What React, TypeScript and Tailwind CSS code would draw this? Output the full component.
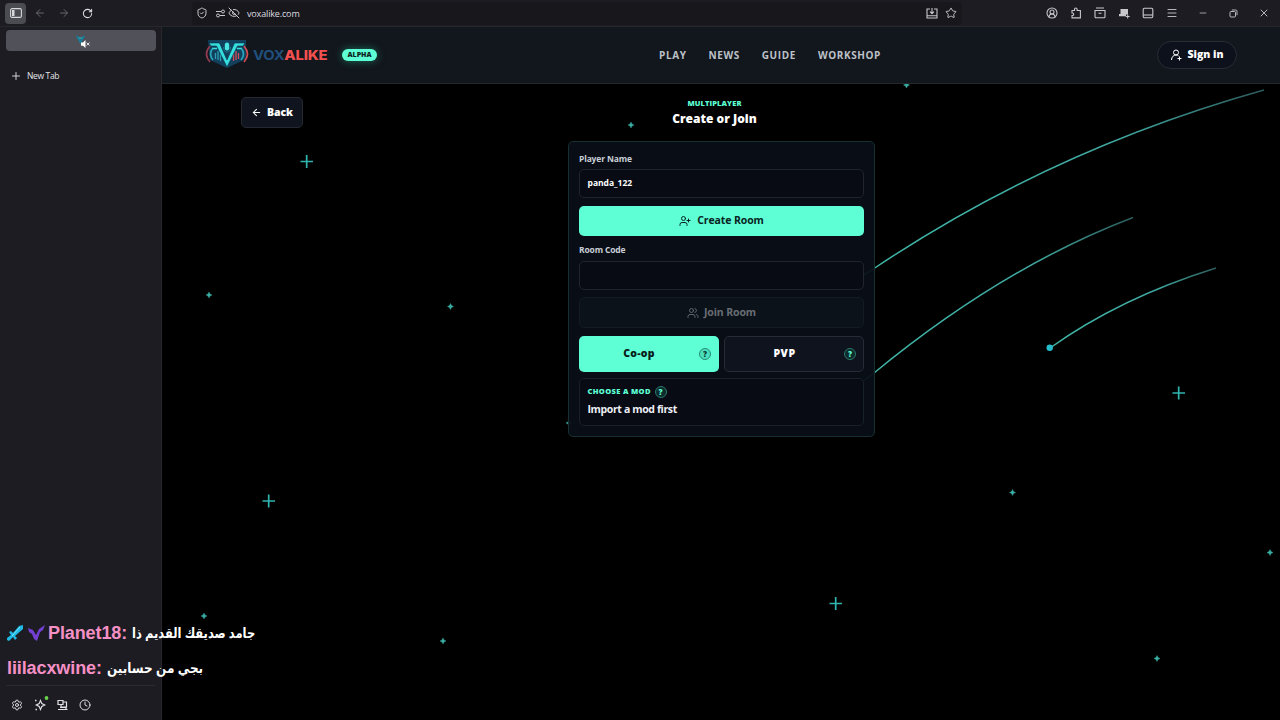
import type { ReactNode } from "react"
import clsx from "clsx"
import {
  ArrowLeft, ArrowRight, RotateCw, Plus, ShieldCheck, EyeOff, Star, CircleUserRound,
  Menu, Minus, X, Settings, Clock, UserPlus, Users,
} from "lucide-react"

const bigStars = [[307, 161], [269, 500.5], [836, 603], [1179, 392.5]]
const smallStars = [[209, 295], [450.5, 306.5], [631, 125], [906.5, 85], [1012.5, 492.5], [1270, 552.5], [1157, 658.5], [443, 641], [204, 616], [569, 423]]

function Sky() {
  return (
    <svg className="absolute inset-0" width="1118" height="636" viewBox="162 84 1118 636" fill="none">
      <defs>
        <linearGradient id="trail" x1="0" y1="1" x2="1" y2="0">
          <stop offset="0" stopColor="#3fb8a8" />
          <stop offset="0.7" stopColor="#3fa69f" />
          <stop offset="1" stopColor="#2c5a5a" />
        </linearGradient>
      </defs>
      <g stroke="url(#trail)" strokeWidth="1.5">
        <path d="M862 276L874 268.5Q1051 149.600 1264 90" />
        <path d="M862 382L874 373Q1003 267 1133 217.500" />
        <path d="M1050 348Q1120 298 1216 268" />
      </g>
      <circle cx="1049.700" cy="347.800" r="3.200" fill="#27bccb" />
      {bigStars.map(([x, y]) => (
        <path key={x} d={`M${x - 6.5} ${y + 0.5}h12.500M${x - 0.3} ${y - 6}v13`} stroke="#2fb5ae" strokeWidth="1.700" />
      ))}
      {smallStars.map(([x, y]) => (
        <path key={x} d={`M${x} ${y - 3}l1 2 2 1-2 1-1 2-1-2-2-1 2-1z`} fill="#3aafa4" stroke="#3aafa4" strokeWidth="0.400" />
      ))}
    </svg>
  )
}

function Logo() {
  return (
    <svg width="44" height="30" viewBox="0 0 44 30" fill="none" className="-mt-[2px] shrink-0">
      <path d="M3 1h38v19L22 29 5 21z" fill="#123f5c" />
      <path d="M5 7q-7 8 0 16" stroke="#8e3b50" strokeWidth="1.700" />
      <path d="M39 7q7 8 0 16" stroke="#d64d50" strokeWidth="1.700" />
      <path d="M8 9q-5 6 0 12M36 9q5 6 0 12" stroke="#27a5ba" strokeWidth="1.700" />
      <path d="M10.500 14v6M13 12v9M15.500 15v7" stroke="#2d9fb4" strokeWidth="1.300" />
      <path d="M33.500 14v6M31 12v9M28.500 15v7" stroke="#cf5058" strokeWidth="1.300" />
      <path d="M4 4h10.500L22 21l7.500-17H40l-2 3h-5.500L22 28 11.500 7H6z" fill="#35dfdf" stroke="#0c3047" strokeWidth="0.600" />
      <path d="M7.500 9.500H12M32 9.500h4.500" stroke="#35dfdf" strokeWidth="1.300" />
      <rect x="19.800" y="3.500" width="4.400" height="8" rx="2.200" fill="#48e5e2" />
      <path d="M18.500 8q0 5 3.500 5t3.500-5" stroke="#1b8799" strokeWidth="0.800" />
    </svg>
  )
}

function SidebarIcon() {
  return (
    <svg width="12" height="10" viewBox="0 0 12 10" fill="none" stroke="#d7d7da">
      <rect x="0.600" y="0.600" width="10.800" height="8.800" rx="1.500" strokeWidth="1.100" />
      <path d="M2 2h2.500v6H2z" fill="#d7d7da" stroke="none" />
    </svg>
  )
}

function Toolbar() {
  return (
    <div className="flex h-[27px] shrink-0 items-center border-b border-[#25272c] bg-[#1d1c22] text-[#c8c8cc]">
      <div className="flex w-[162px] items-center pl-[5px]">
        <span className="flex h-[21px] w-[21px] items-center justify-center rounded bg-[#4b4b52]"><SidebarIcon /></span>
        <ArrowLeft size={12} strokeWidth={1.8} className="ml-2 text-[#6d6d73]" />
        <ArrowRight size={12} strokeWidth={1.8} className="ml-3 text-[#6d6d73]" />
        <RotateCw size={11} strokeWidth={2.2} className="ml-3 text-[#e0e0e2]" />
      </div>
      <div className="ml-[30px] flex h-[23px] w-[770px] items-center rounded bg-[#18171c] pl-[4px]">
        <ShieldCheck size={12} strokeWidth={2} />
        <svg className="ml-[7px]" width="11" height="9" viewBox="0 0 11 9" fill="none" stroke="currentColor">
          <path d="M1 2.500h5M5 6.500h5" /><circle cx="8" cy="2.500" r="1.500" /><circle cx="3" cy="6.500" r="1.500" />
        </svg>
        <EyeOff size={12} strokeWidth={2} className="ml-[2px]" />
        <span className="ml-[7px] pt-[2px] font-['Open_Sans'] text-[9px] tracking-[-0.15px] text-[#dcdce0]">voxalike.com</span>
        <svg className="ml-auto" width="12" height="11" viewBox="0 0 12 11" fill="none" stroke="currentColor" strokeWidth="1.100">
          <path d="M4 1H1v9h10V1H8M1 7.800h10M6 0v5.500M4 3.700l2 2 2-2" />
        </svg>
        <Star size={12} strokeWidth={1.9} className="ml-[7px] mr-[5px]" />
      </div>
      <div className="ml-auto flex items-center pr-[10px]">
        <CircleUserRound size={12} strokeWidth={2.1} />
        <svg className="ml-3" width="12" height="12" viewBox="0 0 12 12" fill="none" stroke="currentColor" strokeWidth="1.100">
          <path d="M2 3.500h2.500V2.300a1.300 1.300 0 0 1 2.600 0v1.200h3.300v7.400H2V8.500h.8a1.300 1.300 0 0 0 0-2.500H2z" />
        </svg>
        <svg className="ml-3" width="12" height="12" viewBox="0 0 12 12" fill="none" stroke="currentColor" strokeWidth="1.100">
          <path d="M2 1h8M1 3.500h10v6.300a1 1 0 0 1-1 1H2a1 1 0 0 1-1-1zM4.500 6.300h3" />
        </svg>
        <svg className="ml-3" width="12" height="12" viewBox="0 0 12 12" fill="none">
          <path d="M2.500 2H10v5.500H8v1.700H1V7h1.500z" fill="currentColor" /><path d="M9.700 7.500v4M7.700 9.500h4" stroke="currentColor" />
        </svg>
        <svg className="ml-3" width="12" height="12" viewBox="0 0 12 12" fill="none" stroke="currentColor" strokeWidth="1.100">
          <rect x="1.200" y="1.200" width="9.600" height="9.600" rx="1.200" /><path d="M1.200 8h9.600" />
        </svg>
        <Menu size={12} strokeWidth={1.8} className="ml-3" />
        <Minus size={10} strokeWidth={1.8} className="ml-5" />
        <svg className="ml-[21px]" width="9" height="9" viewBox="0 0 9 9" fill="none" stroke="currentColor" strokeWidth="0.900">
          <rect x="1" y="2.500" width="5.500" height="5.500" rx="1" /><path d="M2.800 1h4A1.200 1.200 0 0 1 8 2.200v4" />
        </svg>
        <X size={12} strokeWidth={1.8} className="ml-5" />
      </div>
    </div>
  )
}

function Sidebar() {
  return (
    <aside className="flex w-[162px] shrink-0 flex-col border-r border-[#27272c] bg-[#1d1c22] px-[6px] pt-[3px] text-[#e2e2e6]">
      <div className="flex h-[21px] w-[150px] items-center justify-center rounded bg-[#51515a]">
        <svg className="ml-[4px] mt-[2px]" width="14" height="14" viewBox="0 0 14 14" fill="none">
          <path d="M1 1l3.500 6L8 1" stroke="#167e99" strokeWidth="2" /><path d="M3 3h3" stroke="#31c2ca" />
          <path d="M5 7.500h2L9.500 5v8L7 10.800H5z" fill="#fff" /><path d="M10.500 7.500l3 3M13.500 7.500l-3 3" stroke="#ddd" />
        </svg>
      </div>
      <div className="mt-[15px] flex h-5 items-center pl-1">
        <Plus size={12} strokeWidth={1.8} />
        <span className="ml-[5px] font-['Open_Sans'] text-[8.5px] tracking-[-0.35px]">New Tab</span>
      </div>
      <div className="mt-auto flex h-[35px] items-center gap-[11px] border-t border-[#2a292f] pl-[4.5px] pt-[4px]">
        <Settings size={12} strokeWidth={1.900} />
        <svg width="14" height="14" viewBox="0 0 14 14" fill="none" className="-mr-[2px] overflow-visible" stroke="currentColor">
          <path d="M6.500 2.500l1.300 3 3 1.500-3 1.500-1.300 3-1.300-3-3-1.500 3-1.500z" strokeWidth="1.100" />
          <path d="M1 2.500h1.500M1.500 11.500H3" strokeWidth="1.400" />
          <circle cx="12.500" cy="0" r="1.900" fill="#6ad04d" stroke="none" />
        </svg>
        <svg width="11" height="12" viewBox="0 0 11 12" fill="none" stroke="currentColor" strokeWidth="1.200">
          <path d="M1 1.500h5v4H1zM6 3h3.500v5H4V5.500M1 10.500h9.500M3 8.500h6v2" />
        </svg>
        <Clock size={12} strokeWidth={1.9} />
      </div>
    </aside>
  )
}

function Help({ dark }: { dark?: boolean }) {
  return (
    <span className={clsx("flex h-3 w-3 items-center justify-center rounded-full border text-[8px] leading-none font-extrabold", dark ? "border-[#248c76] bg-[#4be0bd] text-[#0a3a32]" : "border-[#28796a] bg-[#0d2a2c] text-[#5effd5]")}>?</span>
  )
}

function Label({ children }: { children: ReactNode }) {
  return <div className="text-[8.5px] leading-3 font-bold tracking-[-0.15px] text-[#c9ced7]">{children}</div>
}

function Lobby() {
  return (
    <section className="relative ml-[406px] mt-[57px] flex h-[296px] w-[307px] flex-col rounded-[5px] border border-[#15302f] bg-[#090f17]/95 px-[10px] pt-[11px]">
      <Label>Player Name</Label>
      <div className="mt-[4px] flex h-[29px] shrink-0 items-center rounded-[5px] border border-[#20252d] bg-[#080a14] px-[7.5px] text-[8.5px] font-bold text-white">panda_122</div>
      <button className="mt-[8px] flex h-[30px] shrink-0 items-center justify-center gap-[6px] rounded-[5px] bg-[#5effd5] text-[10.5px] font-bold tracking-[-0.1px] text-[#08251f]">
        <UserPlus size={12} strokeWidth={2} />Create Room
      </button>
      <div className="mt-[8px]"><Label>Room Code</Label></div>
      <div className="mt-[5px] h-[29px] shrink-0 rounded-[5px] border border-[#20252d] bg-[#080a14]" />
      <button className="mt-[7px] flex h-[31px] shrink-0 items-center justify-center gap-[5px] rounded-[5px] border border-[#141b22] bg-[#0b1219] text-[10.5px] font-bold tracking-[-0.1px] text-[#696d74]">
        <Users size={12} strokeWidth={1.8} />Join Room
      </button>
      <div className="mt-2 grid h-9 shrink-0 grid-cols-2 gap-[5px] text-[10.5px] font-extrabold">
        <div className="flex items-center rounded-[5px] bg-[#5effd5] pr-[8px] text-[#081b18]">
          <span className="flex-1 text-center tracking-[0.2px]">Co-op</span><Help dark />
        </div>
        <div className="flex items-center rounded-[5px] border border-[#252c34] bg-[#0e131e] pr-[7px] text-white">
          <span className="flex-1 text-center tracking-[0.5px]">PVP</span><Help />
        </div>
      </div>
      <div className="mt-[6px] h-12 shrink-0 rounded-[5px] border border-[#182028] bg-[#080a14] px-[7.5px] pt-[7px]">
        <div className="flex h-3 items-center gap-1 text-[7.5px] font-extrabold tracking-[0.35px] text-[#5effd5]">CHOOSE A MOD <Help /></div>
        <div className="mt-[4px] text-[10.5px] leading-[14px] font-bold tracking-[-0.37px] text-[#edf0f5]">Import a mod first</div>
      </div>
    </section>
  )
}

export default function App() {
  return (
    <div className="relative flex h-[720px] w-[1280px] flex-col overflow-hidden bg-black">
      <Toolbar />
      <div className="flex flex-1">
        <Sidebar />
        <main className="flex flex-1 flex-col font-['Open_Sans',sans-serif]">
          <header className="flex h-[57px] shrink-0 items-center border-b border-[#24272b] bg-[#12161d] pr-[43px] pl-[43px]">
            <Logo />
            <span className="ml-[4px] flex w-[73px] origin-left scale-x-[1.14] pt-[2px] font-['Inter'] text-[13px] font-bold tracking-[-0.2px]">
              <span className="text-[#214f7b]">VOX</span><span className="font-extrabold text-[#f2514f]">ALIKE</span>
            </span>
            <span className="ml-[16px] flex h-3 w-[35px] items-center justify-center rounded-full bg-[#5effd5] text-[7px] font-extrabold text-[#0b2420] shadow-[0_0_8px_#1b6b5a]">ALPHA</span>
            <nav className="ml-[282px] flex gap-[22px] text-[10px] font-bold tracking-[0.6px] text-[#bdc1c8]">
              <span>PLAY</span><span>NEWS</span><span>GUIDE</span><span>WORKSHOP</span>
            </nav>
            <button className="ml-auto flex h-7 w-20 items-center justify-center gap-[5px] rounded-full border border-[#292d33] bg-[#0d111b] text-[10.5px] font-extrabold text-white">
              <svg width="12" height="12" viewBox="0 0 12 12" fill="none" stroke="currentColor">
                <circle cx="6" cy="3.500" r="2.500" /><path d="M1.500 11c0-3 2-5 4.500-5q1.700 0 2.600 1M9.500 7.500v4M7.500 9.500h4" />
              </svg>
              Sign in
            </button>
          </header>
          <div className="relative flex-1">
            <Sky />
            <button className="absolute top-[13px] left-[79px] flex h-[31px] w-[62px] items-center justify-center gap-[5px] rounded-[5px] border border-[#252a32] bg-[#0f141f] text-[10.5px] font-extrabold tracking-[-0.1px] text-white">
              <ArrowLeft size={11} strokeWidth={2.2} />Back
            </button>
            <div className="absolute top-[14px] left-[406px] flex w-[293px] flex-col items-center">
              <span className="text-[7.5px] leading-[11px] font-extrabold tracking-[0.1px] text-[#5effd5]">MULTIPLAYER</span>
              <span className="mt-px text-[12px] leading-[18px] font-extrabold text-white">Create or Join</span>
            </div>
            <Lobby />
          </div>
        </main>
      </div>
      <div className="absolute top-[621px] left-[7px] flex flex-col gap-[11px] font-['Liberation_Sans','DejaVu_Sans',sans-serif] text-[18px] leading-6 font-bold whitespace-nowrap text-white">
        <div className="flex items-center">
          <svg width="17" height="16" viewBox="0 0 17 16" className="mr-[4px]">
            <path d="M16 0v4L8 11l2 2-2 2-2-3-4 4-2-1v-2l4-3-2-3 2-1 2 2 6-7z" fill="#20b9e5" /><path d="M13 2L5 11" stroke="#7be9fa" />
          </svg>
          <svg width="18" height="16" viewBox="0 0 18 16" className="mr-[2px]">
            <path d="M0 3l5 2 3 5 3-6 6-4-2 5-3 2-3 9-3-2-2-5-3-2z" fill="#7440d4" />
          </svg>
          <span className="tracking-[-0.1px] text-[#f490c5]">Planet18:</span>
          <span dir="rtl" className="ml-[5px] origin-left scale-x-[0.82] text-[14px]">جامد صديقك القديم ذا</span>
        </div>
        <div className="flex items-center">
          <span className="tracking-[-0.1px] text-[#f490c5]">liilacxwine:</span>
          <span dir="rtl" className="ml-[5px] origin-left scale-x-[0.86] text-[14px]">بجي من حسابين</span>
        </div>
      </div>
    </div>
  )
}
